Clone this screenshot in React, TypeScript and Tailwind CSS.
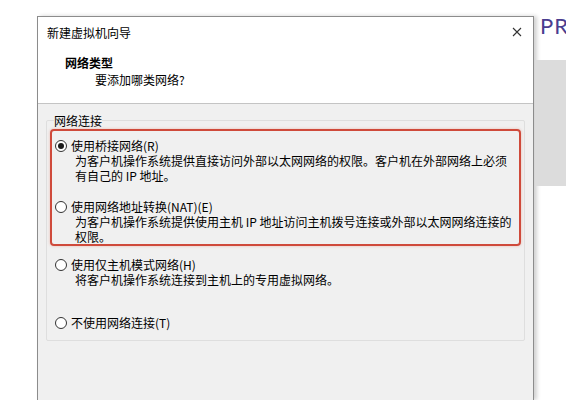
import React from 'react';

const cjk = { fontFamily: '"Noto Sans CJK SC", "Noto Sans", sans-serif' };

// One radio choice with optional description lines
const Choice: React.FC<{ label: string; checked?: boolean; lines?: string[]; className?: string }> = ({
  label,
  checked,
  lines = [],
  className = '',
}) => (
  <div className={className}>
    <div className="flex items-center h-[15px]">
      <span className="w-[12px] h-[12px] rounded-full border border-[#333] bg-white flex items-center justify-center shrink-0">
        {checked && <span className="w-[6px] h-[6px] rounded-full bg-[#1a1a1a]" />}
      </span>
      <span className="ml-[4px] whitespace-nowrap">{label}</span>
    </div>
    {lines.map((l) => (
      <div key={l} className="pl-[20px] h-[15px] leading-[15px] whitespace-nowrap">
        {l}
      </div>
    ))}
  </div>
);

export default function App() {
  return (
    <div className="w-[566px] h-[400px] overflow-hidden bg-white flex items-start text-[12px] leading-[15px] text-black" style={cjk}>
      <div className="w-[37px] shrink-0" />

      {/* Wizard dialog */}
      <div className="mt-[16px] w-[497px] h-[384px] shrink-0 flex flex-col border-l border-t border-r border-[#8c8c8c] shadow-[3px_0_4px_rgba(0,0,0,0.18)]">
        <div className="h-[30px] bg-white flex items-center justify-between pl-[9px] pr-[10px]">
          <span>新建虚拟机向导</span>
          <svg width="10" height="10" viewBox="0 0 10 10" className="mr-[1px]">
            <path d="M1 1L9 9M9 1L1 9" stroke="#333" strokeWidth="1.1" />
          </svg>
        </div>

        <div className="h-[57px] bg-white border-b border-[#c4c4c4] pl-[27px] pt-[8px]">
          <div className="font-bold">网络类型</div>
          <div className="pl-[30px] mt-[2px]">要添加哪类网络?</div>
        </div>

        <div className="flex-1 bg-[#f0f0f0] px-[8px] pt-[9px]">
          <fieldset className="border border-[#dedede] rounded-[2px] px-0 pb-[10px]">
            <legend className="ml-[7px] px-0 h-[15px] leading-[15px]">网络连接</legend>

            <div className="mx-[3px] mt-[1px] border-2 border-[#cf4a3b] rounded-[4px] shadow-[0_0_3px_rgba(230,120,100,0.45)] pl-[3px] pt-[7px]">
              <Choice
                checked
                label="使用桥接网络(R)"
                lines={['为客户机操作系统提供直接访问外部以太网网络的权限。客户机在外部网络上必须', '有自己的 IP 地址。']}
              />
              <Choice
                className="mt-[16px]"
                label="使用网络地址转换(NAT)(E)"
                lines={['为客户机操作系统提供使用主机 IP 地址访问主机拨号连接或外部以太网网络连接的', '权限。']}
              />
            </div>

            <div className="pl-[8px]">
              <Choice className="mt-[11px]" label="使用仅主机模式网络(H)" lines={['将客户机操作系统连接到主机上的专用虚拟网络。']} />
              <Choice className="mt-[28px]" label="不使用网络连接(T)" />
            </div>
          </fieldset>
        </div>
      </div>

      {/* Page behind the dialog */}
      <div className="flex-1 pl-[6px] flex flex-col">
        <div className="h-[44px] pt-[14px] text-[22px] leading-[24px] text-[#4a3d8f] tracking-[1px]" style={{ fontFamily: 'Lato, "Open Sans", sans-serif' }}>
          PR
        </div>
        <div className="-ml-[4px] mt-[16px] h-[126px] bg-[#dcdcdc]" />
      </div>
    </div>
  );
}
